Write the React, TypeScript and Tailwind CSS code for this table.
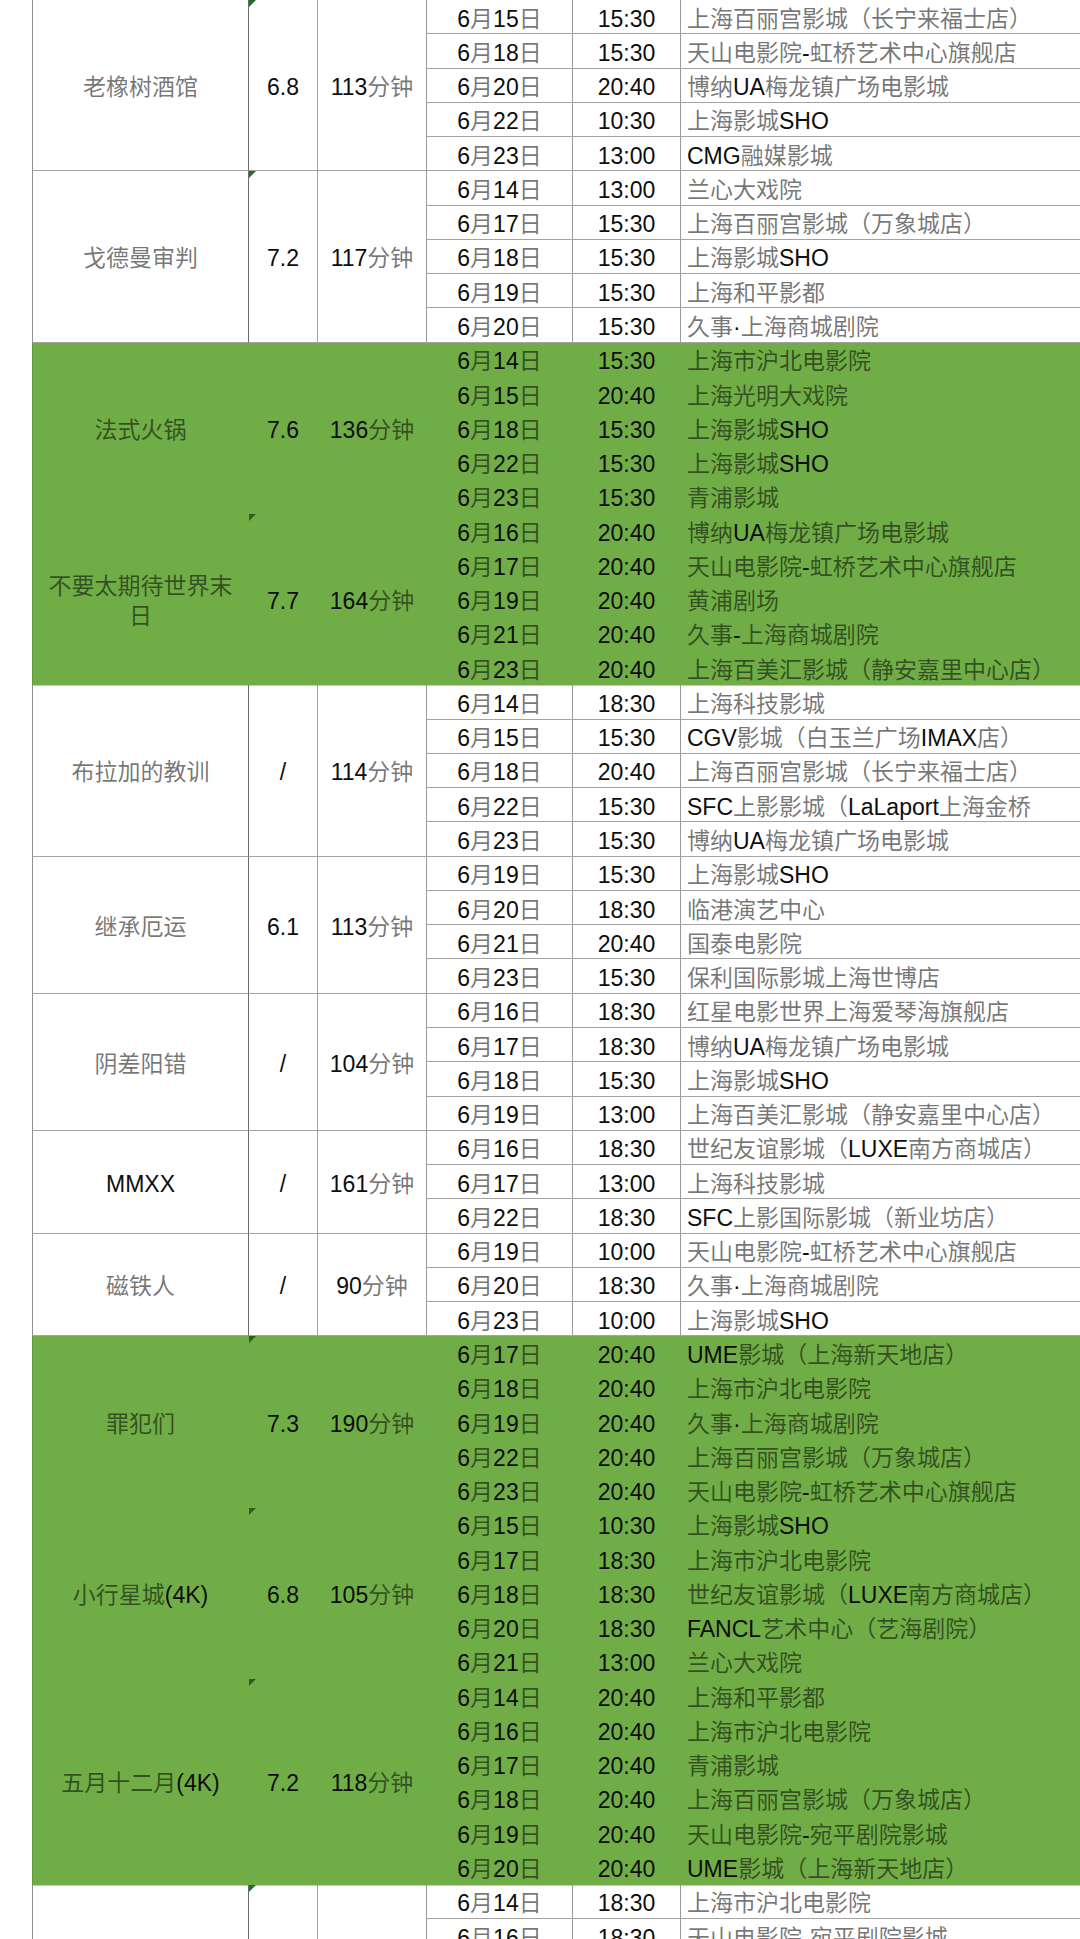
import React from "react";

type Row = [string, string, string];
type Group = {
  title: string;
  rating: string;
  dur: string;
  green?: boolean;
  mark?: boolean;
  afterGreen?: boolean;
  rows: Row[];
};

const groups: Group[] = [
  {
    title: "老橡树酒馆",
    rating: "6.8",
    dur: "113分钟",
    mark: true,
    rows: [
      ["6月15日", "15:30", "上海百丽宫影城（长宁来福士店）"],
      ["6月18日", "15:30", "天山电影院-虹桥艺术中心旗舰店"],
      ["6月20日", "20:40", "博纳UA梅龙镇广场电影城"],
      ["6月22日", "10:30", "上海影城SHO"],
      ["6月23日", "13:00", "CMG融媒影城"],
    ],
  },
  {
    title: "戈德曼审判",
    rating: "7.2",
    dur: "117分钟",
    mark: true,
    rows: [
      ["6月14日", "13:00", "兰心大戏院"],
      ["6月17日", "15:30", "上海百丽宫影城（万象城店）"],
      ["6月18日", "15:30", "上海影城SHO"],
      ["6月19日", "15:30", "上海和平影都"],
      ["6月20日", "15:30", "久事·上海商城剧院"],
    ],
  },
  {
    title: "法式火锅",
    rating: "7.6",
    dur: "136分钟",
    green: true,
    rows: [
      ["6月14日", "15:30", "上海市沪北电影院"],
      ["6月15日", "20:40", "上海光明大戏院"],
      ["6月18日", "15:30", "上海影城SHO"],
      ["6月22日", "15:30", "上海影城SHO"],
      ["6月23日", "15:30", "青浦影城"],
    ],
  },
  {
    title: "不要太期待世界末日",
    rating: "7.7",
    dur: "164分钟",
    green: true,
    mark: true,
    rows: [
      ["6月16日", "20:40", "博纳UA梅龙镇广场电影城"],
      ["6月17日", "20:40", "天山电影院-虹桥艺术中心旗舰店"],
      ["6月19日", "20:40", "黄浦剧场"],
      ["6月21日", "20:40", "久事-上海商城剧院"],
      ["6月23日", "20:40", "上海百美汇影城（静安嘉里中心店）"],
    ],
  },
  {
    title: "布拉加的教训",
    rating: "/",
    dur: "114分钟",
    afterGreen: true,
    rows: [
      ["6月14日", "18:30", "上海科技影城"],
      ["6月15日", "15:30", "CGV影城（白玉兰广场IMAX店）"],
      ["6月18日", "20:40", "上海百丽宫影城（长宁来福士店）"],
      ["6月22日", "15:30", "SFC上影影城（LaLaport上海金桥"],
      ["6月23日", "15:30", "博纳UA梅龙镇广场电影城"],
    ],
  },
  {
    title: "继承厄运",
    rating: "6.1",
    dur: "113分钟",
    rows: [
      ["6月19日", "15:30", "上海影城SHO"],
      ["6月20日", "18:30", "临港演艺中心"],
      ["6月21日", "20:40", "国泰电影院"],
      ["6月23日", "15:30", "保利国际影城上海世博店"],
    ],
  },
  {
    title: "阴差阳错",
    rating: "/",
    dur: "104分钟",
    rows: [
      ["6月16日", "18:30", "红星电影世界上海爱琴海旗舰店"],
      ["6月17日", "18:30", "博纳UA梅龙镇广场电影城"],
      ["6月18日", "15:30", "上海影城SHO"],
      ["6月19日", "13:00", "上海百美汇影城（静安嘉里中心店）"],
    ],
  },
  {
    title: "MMXX",
    rating: "/",
    dur: "161分钟",
    rows: [
      ["6月16日", "18:30", "世纪友谊影城（LUXE南方商城店）"],
      ["6月17日", "13:00", "上海科技影城"],
      ["6月22日", "18:30", "SFC上影国际影城（新业坊店）"],
    ],
  },
  {
    title: "磁铁人",
    rating: "/",
    dur: "90分钟",
    rows: [
      ["6月19日", "10:00", "天山电影院-虹桥艺术中心旗舰店"],
      ["6月20日", "18:30", "久事·上海商城剧院"],
      ["6月23日", "10:00", "上海影城SHO"],
    ],
  },
  {
    title: "罪犯们",
    rating: "7.3",
    dur: "190分钟",
    green: true,
    mark: true,
    rows: [
      ["6月17日", "20:40", "UME影城（上海新天地店）"],
      ["6月18日", "20:40", "上海市沪北电影院"],
      ["6月19日", "20:40", "久事·上海商城剧院"],
      ["6月22日", "20:40", "上海百丽宫影城（万象城店）"],
      ["6月23日", "20:40", "天山电影院-虹桥艺术中心旗舰店"],
    ],
  },
  {
    title: "小行星城 (4K)",
    rating: "6.8",
    dur: "105分钟",
    green: true,
    mark: true,
    rows: [
      ["6月15日", "10:30", "上海影城SHO"],
      ["6月17日", "18:30", "上海市沪北电影院"],
      ["6月18日", "18:30", "世纪友谊影城（LUXE南方商城店）"],
      ["6月20日", "18:30", "FANCL艺术中心（艺海剧院）"],
      ["6月21日", "13:00", "兰心大戏院"],
    ],
  },
  {
    title: "五月十二月 (4K)",
    rating: "7.2",
    dur: "118分钟",
    green: true,
    mark: true,
    rows: [
      ["6月14日", "20:40", "上海和平影都"],
      ["6月16日", "20:40", "上海市沪北电影院"],
      ["6月17日", "20:40", "青浦影城"],
      ["6月18日", "20:40", "上海百丽宫影城（万象城店）"],
      ["6月19日", "20:40", "天山电影院-宛平剧院影城"],
      ["6月20日", "20:40", "UME影城（上海新天地店）"],
    ],
  },
  {
    title: "",
    rating: "",
    dur: "",
    mark: true,
    afterGreen: true,
    rows: [
      ["6月14日", "18:30", "上海市沪北电影院"],
      ["6月16日", "18:30", "天山电影院-宛平剧院影城"],
      ["6月18日", "18:30", "上海影城SHO"],
    ],
  },
];

const SPLIT = /([\u2E80-\u9FFF\u3000-\u303F\uFF00-\uFFEF]+)/;

function Txt({ s }: { s: string }) {
  const parts = s.split(SPLIT);
  return (
    <>
      {parts.map((p, i) =>
        i % 2 === 1 ? (
          <span key={i} className="text-black/55">
            {p}
          </span>
        ) : (
          <React.Fragment key={i}>{p}</React.Fragment>
        )
      )}
    </>
  );
}

function GroupBlock({ g }: { g: Group }) {
  const green = !!g.green;
  const line = green ? "border-transparent" : "border-[#a3a3a3]";
  const vline = green ? "border-transparent" : "border-[#9a9a9a]";
  return (
    <div
      className={
        "flex " +
        (green ? "bg-[#70ad47]" : "bg-white") +
        (g.afterGreen ? " shadow-[inset_0_1px_0_#c4c4c4]" : "")
      }
    >
      <div
        className={
          "w-[216px] shrink-0 border-l border-b flex items-center justify-center px-3 pt-[4px] text-center leading-[30px] " +
          (green ? "border-l-[#5e9a3a] border-b-transparent" : "border-l-[#8f8f8f] border-b-[#a3a3a3]")
        }
      >
        <Txt s={g.title} />
      </div>
      <div
        className={
          "relative w-[69px] shrink-0 border-l border-b flex items-center justify-center pt-[4px] " +
          (green ? "border-transparent" : "border-l-[#6b6b6b] border-b-[#a3a3a3]")
        }
      >
        {g.mark && (
          <span
            className={
              "absolute left-0 top-0 w-0 h-0 border-t-[7px] border-r-[7px] border-r-transparent " +
              (green ? "border-t-[#2f5d1c]" : "border-t-[#1f6e2a]")
            }
          />
        )}
        <Txt s={g.rating} />
      </div>
      <div
        className={
          "w-[109px] shrink-0 border-l border-b flex items-center justify-center pt-[4px] " + line
        }
      >
        <Txt s={g.dur} />
      </div>
      <div className="flex flex-col flex-1 min-w-0">
        {g.rows.map((r, i) => (
          <div key={i} className={"flex h-[34.27px] border-b " + line}>
            <div
              className={
                "w-[146px] shrink-0 border-l flex items-center justify-center pt-[4px] " + vline
              }
            >
              <Txt s={r[0]} />
            </div>
            <div
              className={
                "w-[108px] shrink-0 border-l flex items-center justify-center pt-[4px] " + vline
              }
            >
              {r[1]}
            </div>
            <div
              className={
                "flex-1 min-w-0 border-l flex items-center pl-[6px] pt-[4px] whitespace-nowrap overflow-hidden " +
                vline
              }
            >
              <Txt s={r[2]} />
            </div>
          </div>
        ))}
      </div>
    </div>
  );
}

export default function App() {
  return (
    <div className="w-[1080px] h-[1939px] overflow-hidden bg-white pl-[32px] font-['Liberation_Sans','Noto_Sans_CJK_SC',sans-serif] text-[23px] leading-[26px] text-[#0d0d0d]">
      <div className="flex flex-col">
        {groups.map((g, i) => (
          <GroupBlock key={i} g={g} />
        ))}
      </div>
    </div>
  );
}
